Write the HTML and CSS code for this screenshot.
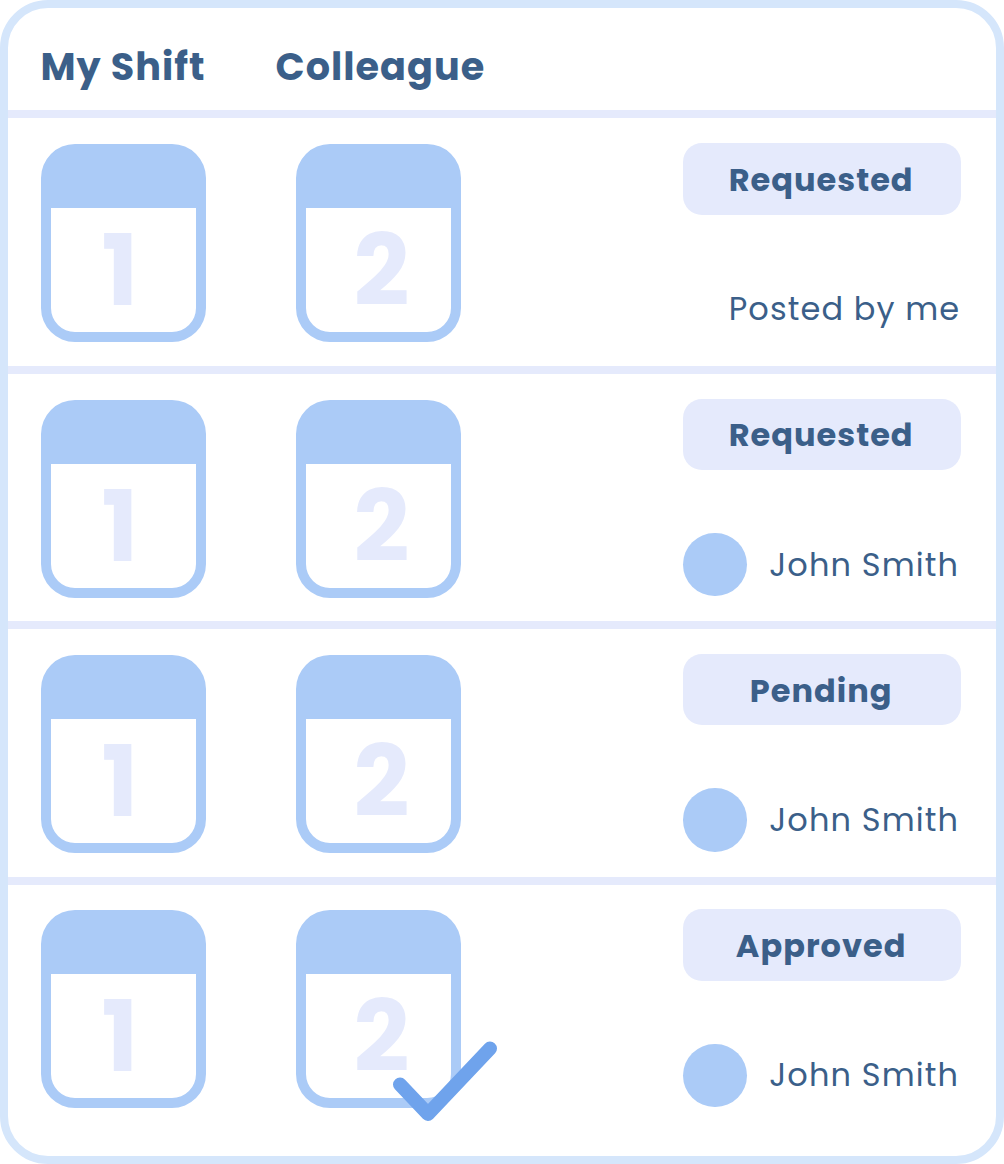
FILE: index.html
```
<!DOCTYPE html>
<html lang="en">
<head>
    <meta charset="UTF-8">
    <meta name="viewport" content="width=device-width, initial-scale=1.0">
    <title>Shift Swaps</title>
    <link rel="stylesheet" href="styles.css">
</head>
<body>
    <main class="swap-card">
        <header class="swap-header">
            <h2>My Shift</h2>
            <h2>Colleague</h2>
        </header>

        <section class="swap-row">
            <div class="calendar one"><span>1</span></div>
            <div class="calendar two"><span>2</span></div>
            <div class="details">
                <div class="badge">Requested</div>
                <div class="person posted"><span>Posted by me</span></div>
            </div>
        </section>

        <section class="swap-row">
            <div class="calendar one"><span>1</span></div>
            <div class="calendar two"><span>2</span></div>
            <div class="details">
                <div class="badge">Requested</div>
                <div class="person"><i class="avatar"></i><span>John Smith</span></div>
            </div>
        </section>

        <section class="swap-row">
            <div class="calendar one"><span>1</span></div>
            <div class="calendar two"><span>2</span></div>
            <div class="details">
                <div class="badge">Pending</div>
                <div class="person"><i class="avatar"></i><span>John Smith</span></div>
            </div>
        </section>

        <section class="swap-row">
            <div class="calendar one"><span>1</span></div>
            <div class="calendar two">
                <span>2</span>
                <svg class="check" viewBox="0 0 108 84" fill="none">
                    <path d="M9 45.5L37 75L99 9.5" stroke="#6fa3ec" stroke-width="14" stroke-linecap="round" stroke-linejoin="round"/>
                </svg>
            </div>
            <div class="details">
                <div class="badge">Approved</div>
                <div class="person"><i class="avatar"></i><span>John Smith</span></div>
            </div>
        </section>
    </main>
</body>
</html>
```
FILE: styles.css
```
* {
    box-sizing: border-box;
}

body {
    margin: 0;
    background: #ffffff;
    color: #3b5f89;
    font-family: Poppins, Inter, sans-serif;
}

.swap-card {
    width: 1004px;
    height: 1164px;
    border: 8px solid #d5e6fb;
    border-radius: 48px;
    overflow: hidden;
}

.swap-header {
    display: grid;
    grid-template-columns: 235.2px 1fr;
    align-items: center;
    height: 102.4px;
    padding: 15px 33px 0 32.4px;
}

.swap-header h2 {
    margin: 0;
    font-size: 38.2px;
    line-height: 50px;
    font-weight: 700;
    letter-spacing: 1px;
    white-space: nowrap;
}

.swap-row {
    display: grid;
    grid-template-columns: 165px 165px 1fr;
    column-gap: 90.4px;
    align-items: start;
    height: 255.4px;
    padding: 25.8px 35px 0 33px;
    border-top: 8px solid #e5eafc;
}

.calendar {
    position: relative;
    display: flex;
    justify-content: center;
    height: 198px;
    border: 10px solid #abcbf7;
    border-top-width: 64px;
    border-radius: 34px;
    /* the sheet below the band keeps square top corners */
    background: #ffffff;
    color: #e5eafc;
    font-size: 98px;
    line-height: 126px;
    font-weight: 700;
}

.two span {
    padding-left: 5px;
}

.one span {
    padding-right: 7px;
}

.check {
    position: absolute;
    left: 85px;
    top: 65px;
    width: 108px;
    height: 84px;
}

.details {
    width: 277.7px;
    justify-self: end;
}

.badge {
    display: flex;
    align-items: center;
    justify-content: center;
    height: 71.4px;
    margin-top: -1px;
    padding: 2px 2px 0 0;
    border-radius: 19px;
    background: #e5eafc;
    font-size: 32px;
    font-weight: 700;
    letter-spacing: 1px;
}

.person {
    display: flex;
    align-items: center;
    height: 63.4px;
    margin-top: 63px;
    gap: 22.6px;
    font-size: 32px;
    letter-spacing: 1.1px;
    white-space: nowrap;
}

.posted {
    padding-left: 45.4px;
}

.avatar {
    width: 63.4px;
    height: 63.4px;
    border-radius: 50%;
    background: #abcbf7;
}
```
